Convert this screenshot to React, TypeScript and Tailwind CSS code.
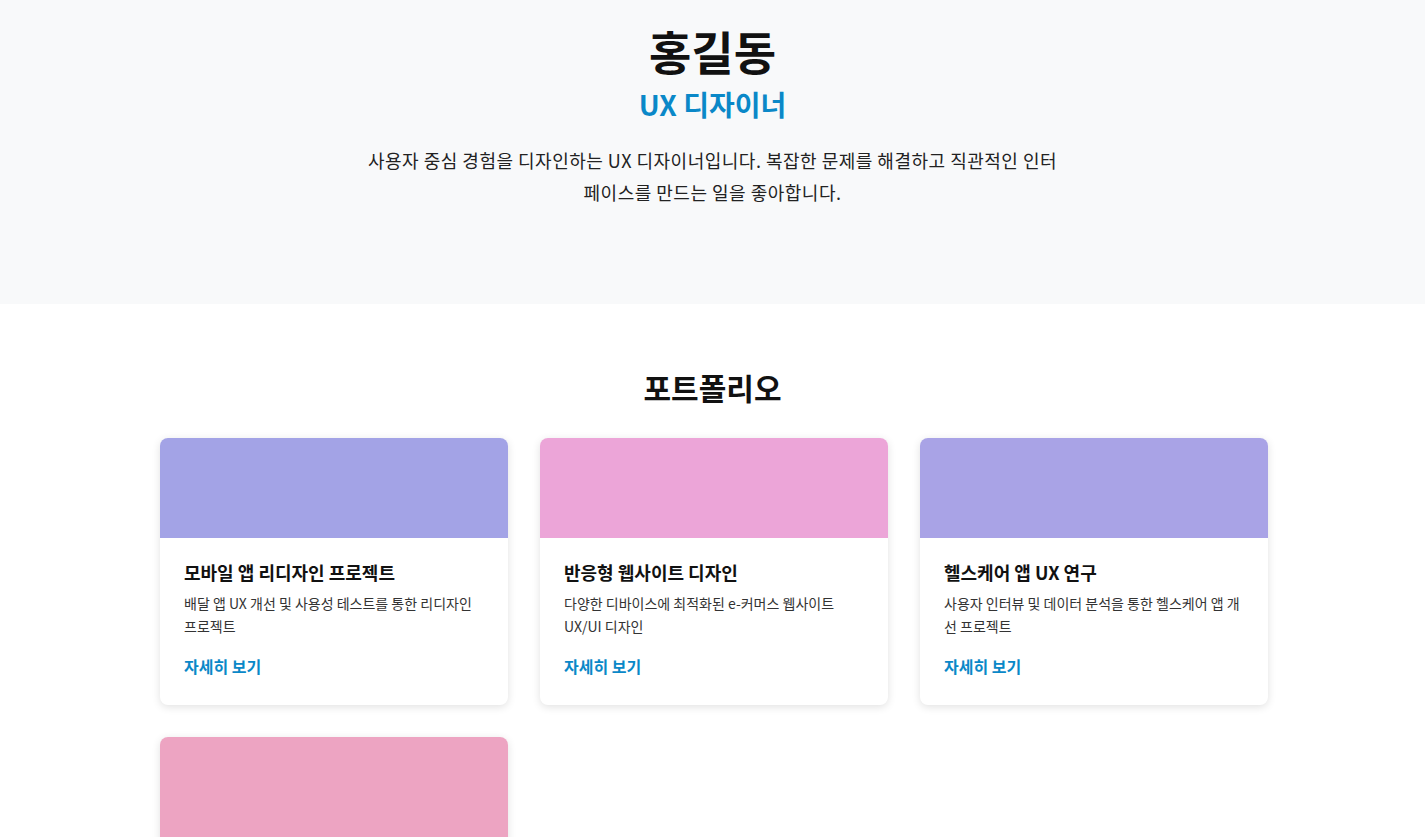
const projects = [
  {
    title: "모바일 앱 리디자인 프로젝트",
    desc: "배달 앱 UX 개선 및 사용성 테스트를 통한 리디자인 프로젝트",
    color: "bg-[#a3a3e6]",
  },
  {
    title: "반응형 웹사이트 디자인",
    desc: "다양한 디바이스에 최적화된 e-커머스 웹사이트 UX/UI 디자인",
    color: "bg-[#eca5d8]",
  },
  {
    title: "헬스케어 앱 UX 연구",
    desc: "사용자 인터뷰 및 데이터 분석을 통한 헬스케어 앱 개선 프로젝트",
    color: "bg-[#a9a3e6]",
  },
  {
    title: "핀테크 서비스 디자인",
    desc: "간편 송금 서비스의 사용자 경험 설계 프로젝트",
    color: "bg-[#eda4c2]",
  },
];

const App: React.FC = () => {
  return (
    <div className="min-h-screen bg-white text-[#111] font-['Noto_Sans_CJK_KR','Noto_Sans',sans-serif]">
      <header className="bg-[#f8f9fa] pt-[21px] pb-[96px] text-center h-[304px]">
        <h1 className="text-[46px] font-bold leading-[58px] text-[#111]">홍길동</h1>
        <h2 className="mt-2 text-[28px] font-bold leading-[34px] text-[#0a88c8]">UX 디자이너</h2>
        <p className="mx-auto mt-[23px] max-w-[692px] text-[18px] leading-[32px] tracking-[0.5px] text-[#222]">
          사용자 중심 경험을 디자인하는 UX 디자이너입니다. 복잡한 문제를 해결하고 직관적인 인터페이스를
          만드는 일을 좋아합니다.
        </p>
      </header>

      <section className="pt-16 pb-16">
        <h2 className="text-center text-[30px] font-bold leading-[38px] text-[#111]">포트폴리오</h2>
        <div className="ml-[calc(50%-552.5px)] mt-8 grid w-[1108px] grid-cols-3 gap-8">
          {projects.map((p) => (
            <div
              key={p.title}
              className="overflow-hidden rounded-lg bg-white shadow-[0_2px_8px_rgba(0,0,0,0.12)]"
            >
              <div className={`h-[100px] ${p.color}`} />
              <div className="px-6 pt-[21px] pb-[27px]">
                <h3 className="text-[18px] font-bold leading-[26px] text-[#111]">{p.title}</h3>
                <p className="mt-[7px] text-[14px] leading-[23px] text-[#333]">{p.desc}</p>
                <a href="#" className="mt-[16px] block text-[16px] font-semibold leading-[24px] text-[#0a88c8]">
                  자세히 보기
                </a>
              </div>
            </div>
          ))}
        </div>
      </section>
    </div>
  );
};

export default App;
